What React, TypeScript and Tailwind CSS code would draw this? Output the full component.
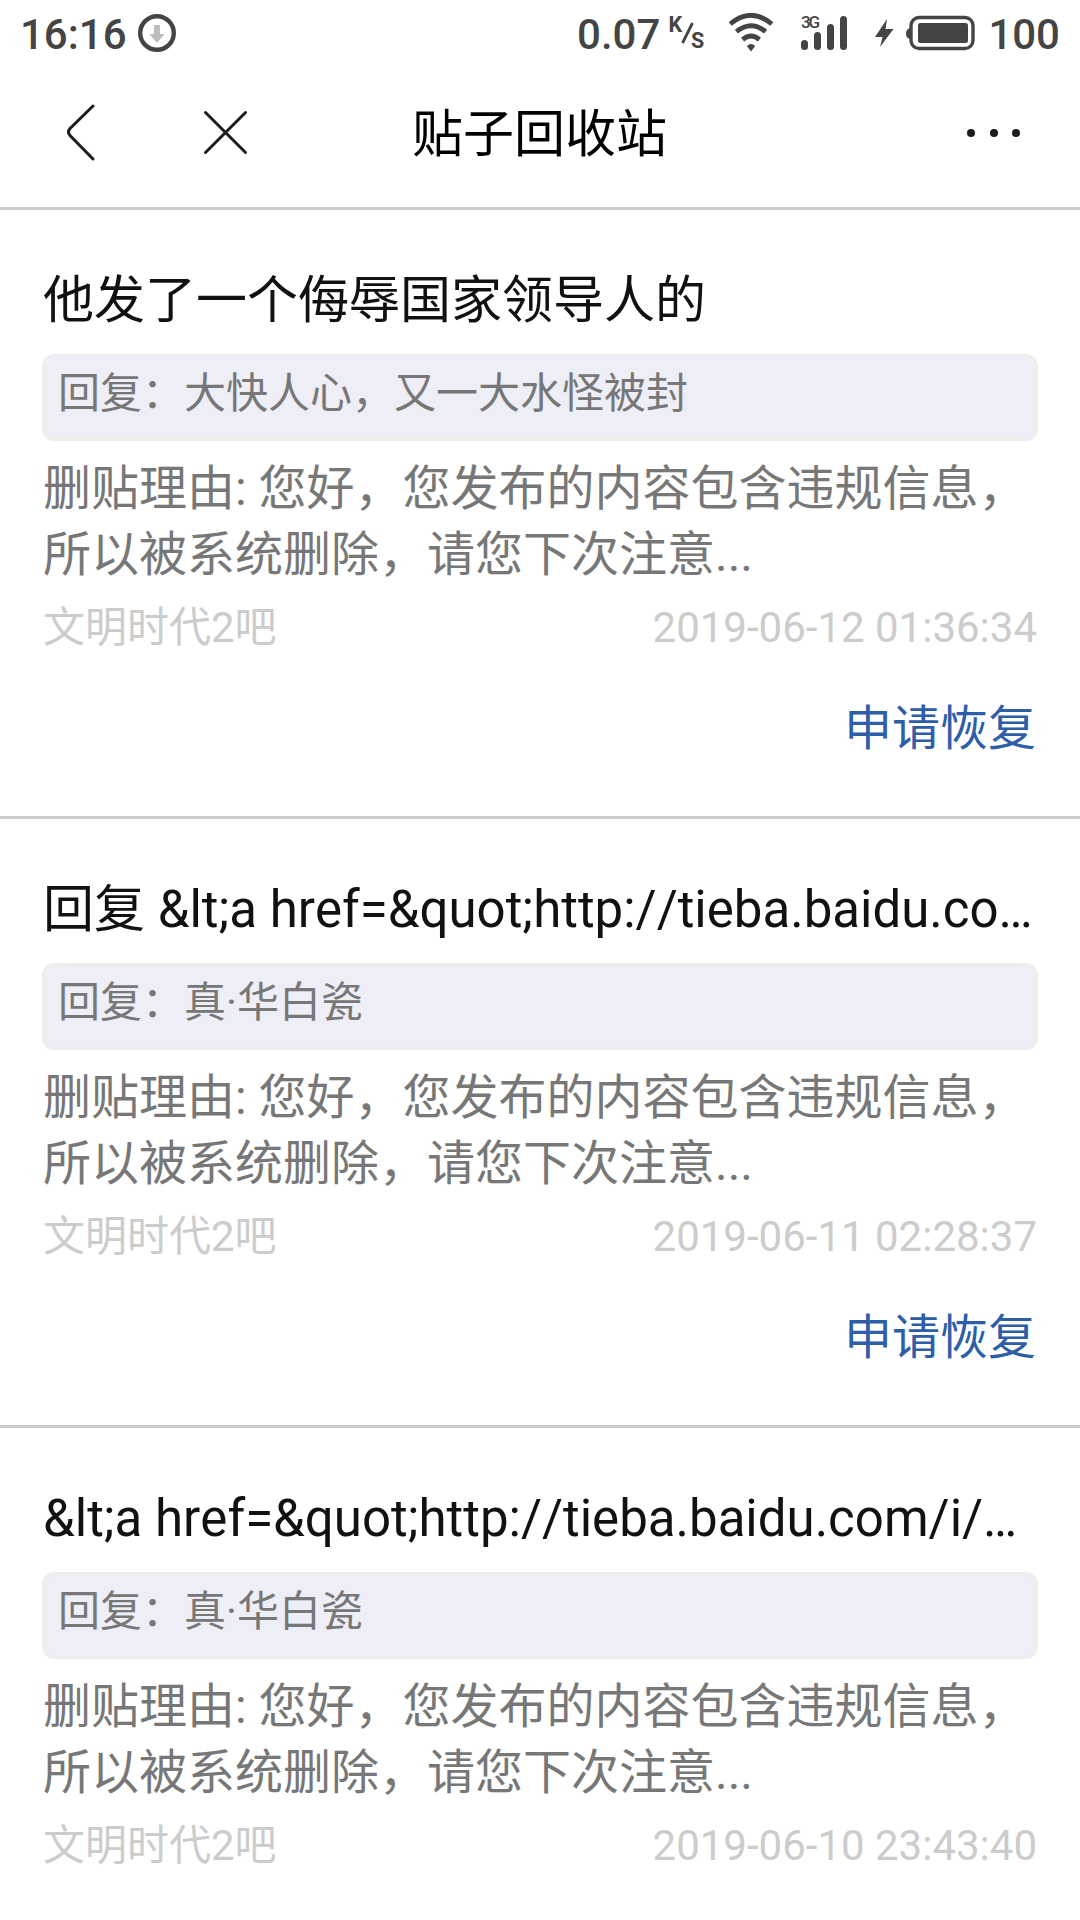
import React from "react";

type Post = { title: string; reply: string; time: string; restorable: boolean };

const posts: Post[] = [
  { title: "他发了一个侮辱国家领导人的", reply: "大快人心，又一大水怪被封", time: "2019-06-12 01:36:34", restorable: true },
  { title: "回复 &lt;a href=&quot;http://tieba.baidu.co…", reply: "真·华白瓷", time: "2019-06-11 02:28:37", restorable: true },
  { title: "&lt;a href=&quot;http://tieba.baidu.com/i/…", reply: "真·华白瓷", time: "2019-06-10 23:43:40", restorable: false },
];

function DownloadIcon() {
  return (
    <svg className="ml-[11px] mt-[14px] h-[38px] w-[38px] shrink-0" viewBox="0 0 38 38">
      <circle cx="19" cy="19" r="16.8" fill="none" stroke="#444" strokeWidth="4.4" />
      <path d="M16 11h6v9h4.7L19 29l-7.700-9H16z" fill="#bdbdbd" />
    </svg>
  );
}

function SpeedUnit() {
  return (
    <svg className="ml-[9px] h-[70px] w-[40px] shrink-0" viewBox="0 0 40 70" fill="#444">
      <text x="-0.5" y="32.3" fontSize="21.500" fontWeight="700" fontFamily="Roboto" textLength="13">K</text>
      <path d="M13.500 43 23.500 23" stroke="#444" strokeWidth="2.800" />
      <text x="22" y="48.300" fontSize="21.500" fontWeight="700" fontFamily="Roboto">S</text>
    </svg>
  );
}

function WifiIcon() {
  return (
    <svg className="absolute left-[728px] top-[13px] h-[40px] w-[46px]" viewBox="0 0 46 40">
      <g fill="none" stroke="#444" strokeWidth="4.800">
        <path d="M2.200 11Q23-6.400 43.800 11" />
        <path d="M8.400 18.600Q23 6.700 37.600 18.600" />
        <path d="M14.600 26.600Q23 19.600 31.400 26.600" />
      </g>
      <path d="M18.800 33Q23 29 27.200 33L23 38.500Z" fill="#444" />
    </svg>
  );
}

function SignalIcon() {
  return (
    <svg className="h-[40px] w-[50px] shrink-0" viewBox="0 0 50 40" fill="#444">
      <text x="0" y="15" fontSize="17" fontWeight="500" fontFamily="Roboto" textLength="19">3G</text>
      <rect x="0" y="27" width="7" height="10" rx="3.500" />
      <rect x="13" y="19" width="7" height="18" rx="3.500" />
      <rect x="26" y="11" width="7" height="26" rx="3.500" />
      <rect x="39" y="3" width="7" height="34" rx="3.500" />
    </svg>
  );
}

function BatteryIcon() {
  return (
    <svg className="h-[40px] w-[104px] shrink-0" viewBox="0 0 104 40">
      <path d="M13 6 1 24h7.500L6 34 19.500 16h-8z" fill="#444" />
      <path d="M36 15q-4 1-4 5.500t4 5.500z" fill="#444" />
      <rect x="37" y="4.500" width="62" height="31" rx="8" fill="none" stroke="#444" strokeWidth="3.400" />
      <rect x="44" y="10" width="50" height="20" rx="2.500" fill="#444" />
    </svg>
  );
}

function StatusBar() {
  return (
    <div className="relative flex h-[70px] shrink-0 items-start pl-[20px] pr-[20px] text-[42px] leading-[69px] font-medium text-[#444]">
      <span>16:16</span>
      <DownloadIcon />
      <div className="ml-auto flex">
        <span>0.07</span>
        <SpeedUnit />
        <div className="ml-[92px] mt-[13px] flex gap-[23px]">
          <SignalIcon />
          <BatteryIcon />
        </div>
        <span className="ml-[10px]">100</span>
      </div>
      <WifiIcon />
    </div>
  );
}

function NavBar() {
  return (
    <header className="relative flex h-[140px] shrink-0 items-center border-b-[3px] border-[#ccc] pb-[11px]">
      <svg className="ml-[63px] h-[60px] w-[34px]" viewBox="0 0 34 60" fill="none" stroke="#1c1c1c" strokeWidth="3" strokeLinecap="round">
        <path d="M30 3 7 25.500Q4 29 7 32.500L30 56" />
      </svg>
      <svg className="ml-[103px] h-[50px] w-[50px]" viewBox="0 0 50 50" fill="none" stroke="#1c1c1c" strokeWidth="3" strokeLinecap="round">
        <path d="M5.500 4.500 45.500 44.500M45.500 4.500 5.500 44.500" />
      </svg>
      <h1 className="ml-[162px] mt-[3px] text-[51px] leading-[60px] text-black">贴子回收站</h1>
      <div className="-mt-px ml-auto mr-[60px] flex gap-[14.500px]">
        <i className="h-2 w-2 rounded-full bg-[#1c1c1c]" />
        <i className="h-2 w-2 rounded-full bg-[#1c1c1c]" />
        <i className="h-2 w-2 rounded-full bg-[#1c1c1c]" />
      </div>
    </header>
  );
}

function PostCard({ post }: { post: Post }) {
  return (
    <article className="h-[609px] shrink-0 border-b-[3px] border-[#ccc] px-[42px] pt-[61px]">
      <h2 className="whitespace-nowrap pl-px text-[51px] leading-[60px] text-[#111] [font-kerning:none]">{post.title}</h2>
      <div className="mt-[23px] h-[87px] rounded-[12px] border-[3px] border-[#eee] bg-[#eeeef6] pl-[13px] pt-[12px] text-[42px] leading-[50px] text-[#777]">
        回复：{post.reply}
      </div>
      <p className="mt-[15px] whitespace-nowrap pl-px text-[48px] leading-[66px] text-[#777]">
        删贴理由: 您好，您发布的内容包含违规信息，
        <br />
        所以被系统删除，请您下次注意...
      </p>
      <div className="mt-[15px] flex justify-between pl-px pr-px text-[42px] leading-[50px] text-[#ccc]">
        <span>文明时代2吧</span>
        <time>{post.time}</time>
      </div>
      {post.restorable && (
        <div className="mt-[46px] pr-[2px] text-right text-[48px] leading-[60px] text-[#2e5ea8]">申请恢复</div>
      )}
    </article>
  );
}

export default function App() {
  return (
    <main className="flex h-[1920px] w-[1080px] flex-col overflow-hidden bg-white font-[Roboto,'Noto_Sans_CJK_SC',sans-serif]">
      <StatusBar />
      <NavBar />
      {posts.map((p) => (
        <PostCard key={p.time} post={p} />
      ))}
    </main>
  );
}
